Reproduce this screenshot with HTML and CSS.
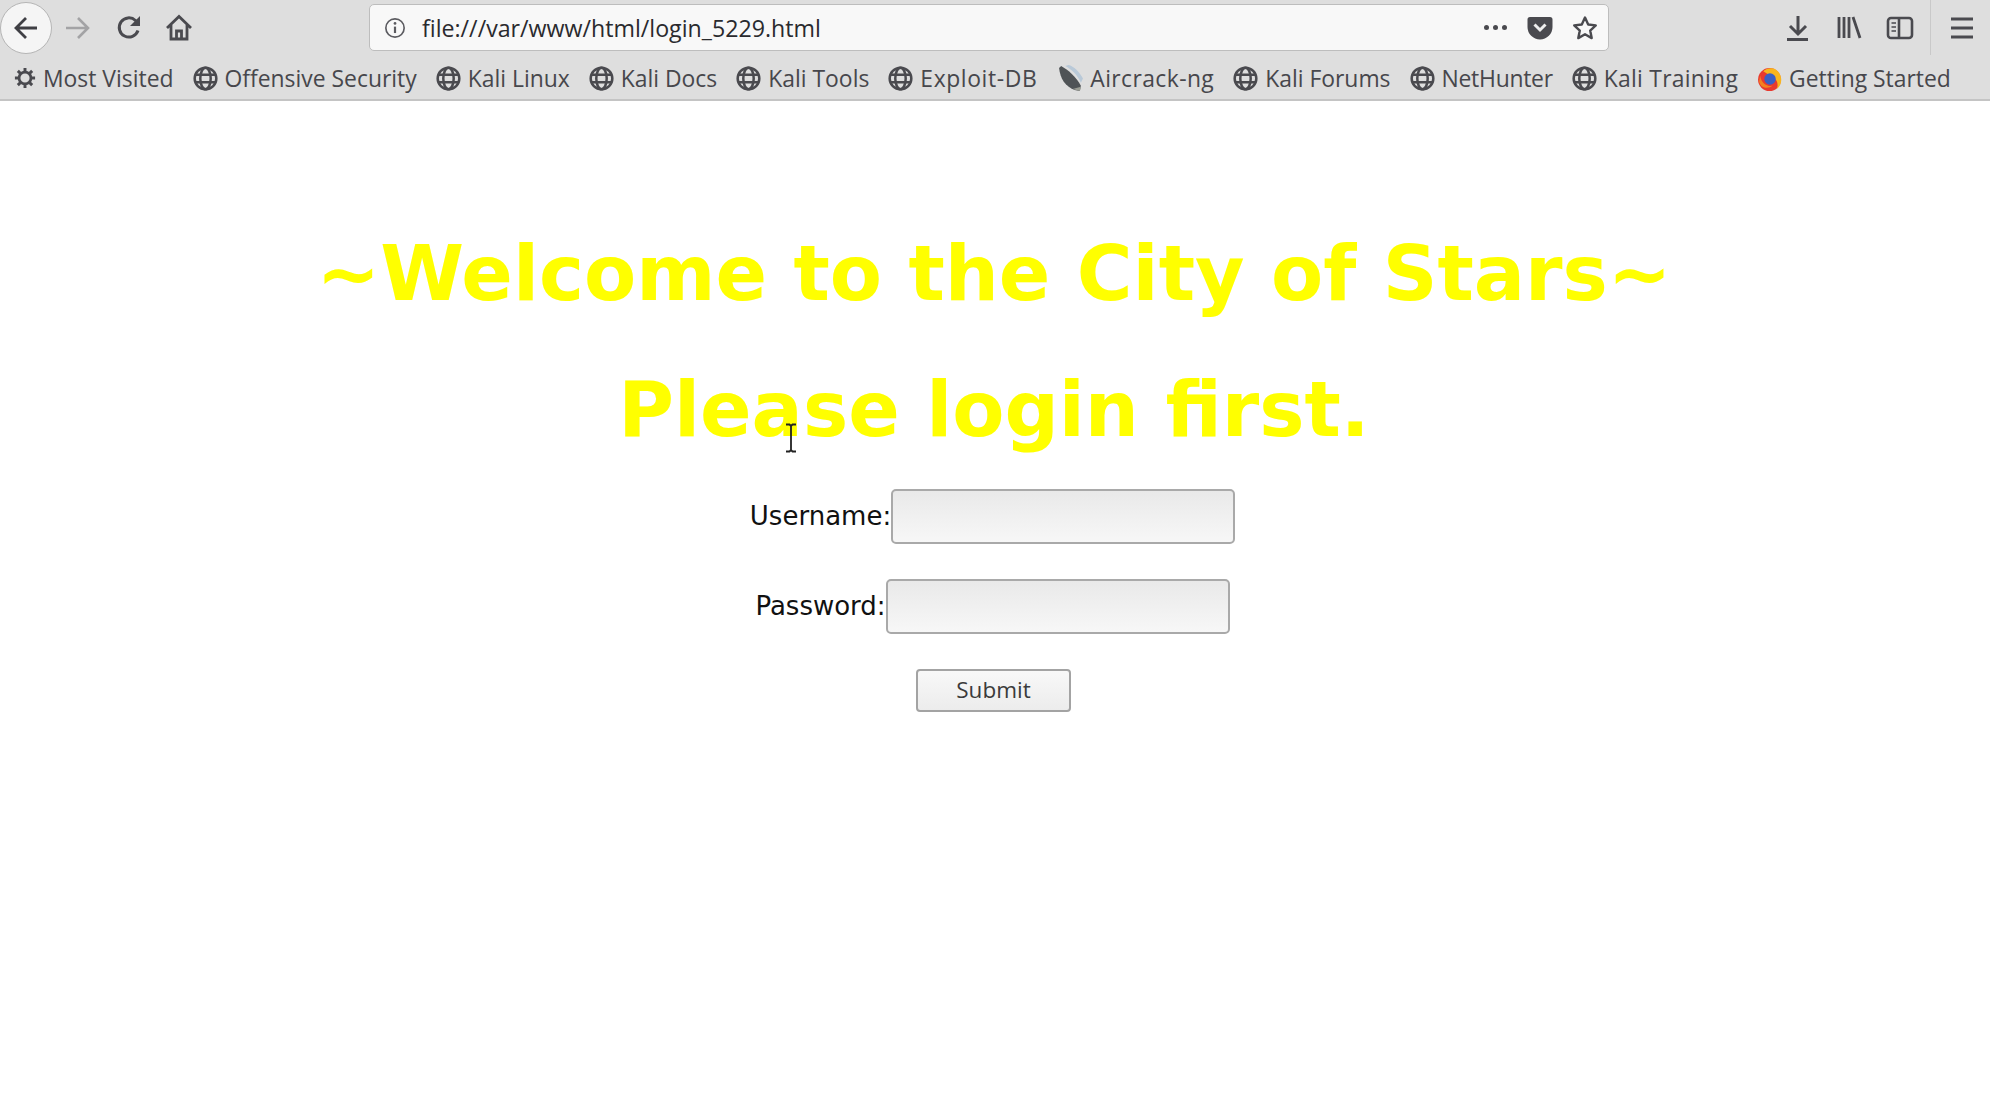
FILE: index.html
```html
<!DOCTYPE html>
<html lang="en">
<head>
<meta charset="utf-8">
<title>login_5229</title>
<link rel="stylesheet" href="styles.css">
</head>
<body>
<svg class="defs" width="0" height="0" aria-hidden="true">
  <symbol id="globe" viewBox="0 0 24 24"><g fill="none" stroke="#4a4a4f" stroke-width="2.400"><circle cx="12" cy="12" r="10.400"/><ellipse cx="12" cy="12" rx="5" ry="10.400"/><path d="M2 8.500h20M2 15.500h20"/></g></symbol>
</svg>
<header class="chrome">
  <div class="toolbar">
    <div class="back"><svg class="ico" viewBox="0 0 28 28"><path d="M25 14H4M14 4L4 14l10 10" fill="none" stroke="#3f3f44" stroke-width="2.800"/></svg></div>
    <svg class="ico forward" viewBox="0 0 28 28"><path d="M2 14h22M14 4l10 10-10 10" fill="none" stroke="#a3a3a5" stroke-width="2.600"/></svg>
    <svg class="ico reload" viewBox="0 0 28 28"><path d="M23 16.500A9.600 9.600 0 1 1 20.500 6.500L24 10" fill="none" stroke="#4a4a4f" stroke-width="3"/><path d="M25 2v10H15z" fill="#4a4a4f"/></svg>
    <svg class="ico home" viewBox="0 0 28 28"><path d="M2 14L14 2.500 26 14M6 11v14h16V11M11.500 25v-8h5v8" fill="none" stroke="#4a4a4f" stroke-width="2.800"/></svg>
    <div class="urlbar">
      <svg class="info" viewBox="0 0 24 24"><circle cx="12" cy="12" r="10" fill="none" stroke="#5b5b60" stroke-width="1.800"/><path d="M12 10.500v7" stroke="#5b5b60" stroke-width="2.400"/><circle cx="12" cy="7" r="1.500" fill="#5b5b60"/></svg>
      <span class="url">file:///var/www/html/login_5229.html</span>
      <span class="dots"><i></i><i></i><i></i></span>
      <svg class="pocket" viewBox="0 0 26 24"><path d="M3 1h20a2.500 2.500 0 0 1 2.500 2.500V11a12.500 12.500 0 0 1-25 0V3.500A2.500 2.500 0 0 1 3 1z" fill="#4a4a4f"/><path d="M7.500 8.500L13 14l5.500-5.500" fill="none" stroke="#eee" stroke-width="3"/></svg>
      <svg class="star" viewBox="0 0 26 26"><path d="M13 2.500l3.200 7 7.600.9-5.600 5.200 1.500 7.500-6.700-3.800-6.700 3.800 1.500-7.500-5.600-5.200 7.600-.9z" fill="none" stroke="#4a4a4f" stroke-width="2.400" stroke-linejoin="round"/></svg>
    </div>
    <div class="tools">
      <svg class="ico" viewBox="0 0 28 28"><path d="M14 2v18M6 12l8 8 8-8" fill="none" stroke="#4a4a4f" stroke-width="3"/><path d="M3 25.500h21" stroke="#4a4a4f" stroke-width="3"/></svg>
      <svg class="ico" viewBox="0 0 28 28"><path d="M4 3v21M9 3v21M14 3v21M18 3l7 21" fill="none" stroke="#4a4a4f" stroke-width="2.800"/></svg>
      <svg class="ico" viewBox="0 0 28 28"><rect x="2" y="4" width="24" height="20" rx="3" fill="none" stroke="#4a4a4f" stroke-width="2.600"/><path d="M13 4v20" stroke="#4a4a4f" stroke-width="2.600"/><path d="M5.500 9h4.500M5.500 13h4.500M5.500 17h4.500" stroke="#4a4a4f" stroke-width="1.500"/></svg>
      <span class="sep"></span>
      <svg class="ico" viewBox="0 0 28 28"><path d="M3 5h22M3 14h22M3 23h22" stroke="#4a4a4f" stroke-width="3"/></svg>
    </div>
  </div>
  <nav class="bookmarks">
    <a class="bm bm-first"><svg class="bi gear" viewBox="0 0 24 24"><circle cx="12" cy="12" r="6.500" fill="none" stroke="#4a4a4f" stroke-width="3"/><path d="M12 1v5M12 18v5M1 12h5M18 12h5M4.200 4.200l3.500 3.500M16.300 16.300l3.500 3.500M19.800 4.200l-3.500 3.500M7.700 16.300l-3.500 3.500" stroke="#4a4a4f" stroke-width="3.200"/></svg>Most Visited</a>
    <a class="bm"><svg class="bi"><use href="#globe"/></svg>Offensive Security</a>
    <a class="bm"><svg class="bi"><use href="#globe"/></svg>Kali Linux</a>
    <a class="bm"><svg class="bi"><use href="#globe"/></svg>Kali Docs</a>
    <a class="bm"><svg class="bi"><use href="#globe"/></svg>Kali Tools</a>
    <a class="bm bm-exploit"><svg class="bi"><use href="#globe"/></svg>Exploit-DB</a>
    <a class="bm bm-wide"><svg class="bi dish" viewBox="0 0 24 26"><path d="M1 3c1 10 6 18 15 21l5 1 1-5C17 11 10 5 3 1z" fill="#4f5356"/><path d="M7 1c6 3 12 9 15 16l2-4C21 7 15 1 10 0z" fill="#b9c9d8"/><path d="M14 23l7 2 1-4z" fill="#9a9d94"/></svg>Aircrack-ng</a>
    <a class="bm"><svg class="bi"><use href="#globe"/></svg>Kali Forums</a>
    <a class="bm bm-narrow"><svg class="bi"><use href="#globe"/></svg>NetHunter</a>
    <a class="bm bm-loose"><svg class="bi"><use href="#globe"/></svg>Kali Training</a>
    <a class="bm"><svg class="bi" viewBox="0 0 24 24"><circle cx="12" cy="13" r="11" fill="#e8392f"/><path d="M6 5c5-5 15-4 17 6 1 5-1 9-4 11 2-5 0-10-5-12z" fill="#f9b51c"/><circle cx="12.500" cy="12.500" r="5.500" fill="#3a5fc4"/><path d="M3 9c1 7 6 11 12 10-4 3-11 3-13-4z" fill="#f48120"/></svg>Getting Started</a>
  </nav>
</header>
<main class="page">
  <h1 class="title">~Welcome to the City of Stars~</h1>
  <h1 class="title">Please login first.</h1>
  <form class="login">
    <p class="field"><label>Username:</label><input class="input" type="text"></p>
    <p class="field"><label>Password:</label><input class="input" type="password"></p>
    <p class="field submit-row"><button class="submit" type="button">Submit</button></p>
  </form>
  <svg class="cursor" viewBox="0 0 14 30"><path d="M2 1.500h3.500l1.500 1.500 1.500-1.500H12M7 3v24M2 28.500h3.500l1.500-1.500 1.500 1.500H12" fill="none" stroke="#222" stroke-width="1.800"/></svg>
</main>
</body>
</html>
```

FILE: styles.css
```css
* { box-sizing: border-box; }
html, body { margin: 0; padding: 0; height: 100%; background: #fff; }
body { overflow: hidden; }
.defs { position: absolute; }

.chrome { background: #dedede; height: 101px; border-bottom: 2px solid #c4c4c4; font-family: "Open Sans", "Noto Sans", sans-serif; color: #3f3f44; }

.toolbar { height: 55px; display: flex; align-items: center; position: relative; }
.ico { width: 28px; height: 28px; flex: none; display: block; }
.back { width: 52px; height: 52px; border-radius: 50%; background: #f5f5f5; border: 1.500px solid #b5b5b5; display: flex; align-items: center; justify-content: center; flex: none; }
.forward { margin-left: 12px; }
.reload { margin-left: 23px; }
.home { margin-left: 22px; }

.urlbar { margin-left: 176px; width: 1240px; height: 47px; background: #f8f8f8; border: 1.500px solid #bdbdbd; border-radius: 5px; display: flex; align-items: center; flex: none; }
.info { width: 22px; height: 22px; margin-left: 14px; flex: none; }
.url { margin-left: 16px; font-size: 23.200px; color: #2a2a2e; flex: 1; white-space: nowrap; }
.dots { display: flex; gap: 4px; margin-right: 20px; }
.dots i { width: 5px; height: 5px; border-radius: 50%; background: #4a4a4f; display: block; }
.pocket { width: 26px; height: 24px; margin-right: 19px; flex: none; }
.star { width: 26px; height: 26px; margin-right: 10px; flex: none; }

.tools { flex: 1; display: flex; align-items: center; padding-left: 175px; gap: 23px; height: 55px; }
.sep { width: 1px; height: 55px; background: #c9c9c9; margin: 0 -6px 0 -7px; }

.bookmarks { height: 46px; display: flex; align-items: center; padding-left: 14px; font-size: 22.900px; white-space: nowrap; }
.bm { display: flex; align-items: center; gap: 7px; margin-right: 19px; color: #47474c; }
.bm-exploit { letter-spacing: 0.600px; margin-right: 21px; }
.bm-wide { letter-spacing: 0.400px; }
.bm-narrow { letter-spacing: -0.250px; }
.bm-loose { letter-spacing: 0.250px; }
.bi { width: 25px; height: 25px; flex: none; }
.gear { width: 22px; height: 22px; }
.dish { width: 25px; height: 27px; }

.page { position: relative; font-family: "DejaVu Sans", sans-serif; text-align: center; height: 1015px; padding-top: 105px; }
.title { margin: 0; padding-right: 2px; color: #ffff00; font-size: 76px; font-weight: 700; line-height: 136px; }
.login { margin: 11px 0 0; }
.field { margin: 0; font-size: 26px; color: #111; display: flex; justify-content: center; align-items: center; }
.field + .field { margin-top: 35px; }
.field label { margin-bottom: 2px; }
.input { width: 344px; height: 55px; border: 2.500px solid #a9a9a9; border-radius: 5px; background: linear-gradient(#e9e9e9, #f7f7f7); padding: 0; margin: 0 5px 0 0; }
.submit { width: 155px; height: 43px; font-family: "Open Sans", "Noto Sans", sans-serif; font-size: 22.500px; color: #3b3b3b; background: linear-gradient(#f8f8f8, #ececec); border: 2px solid #a3a3a3; border-radius: 4px; padding: 0; margin-right: 3px; line-height: 1; }
.cursor { position: absolute; left: 784px; top: 322px; width: 14px; height: 30px; }
```
